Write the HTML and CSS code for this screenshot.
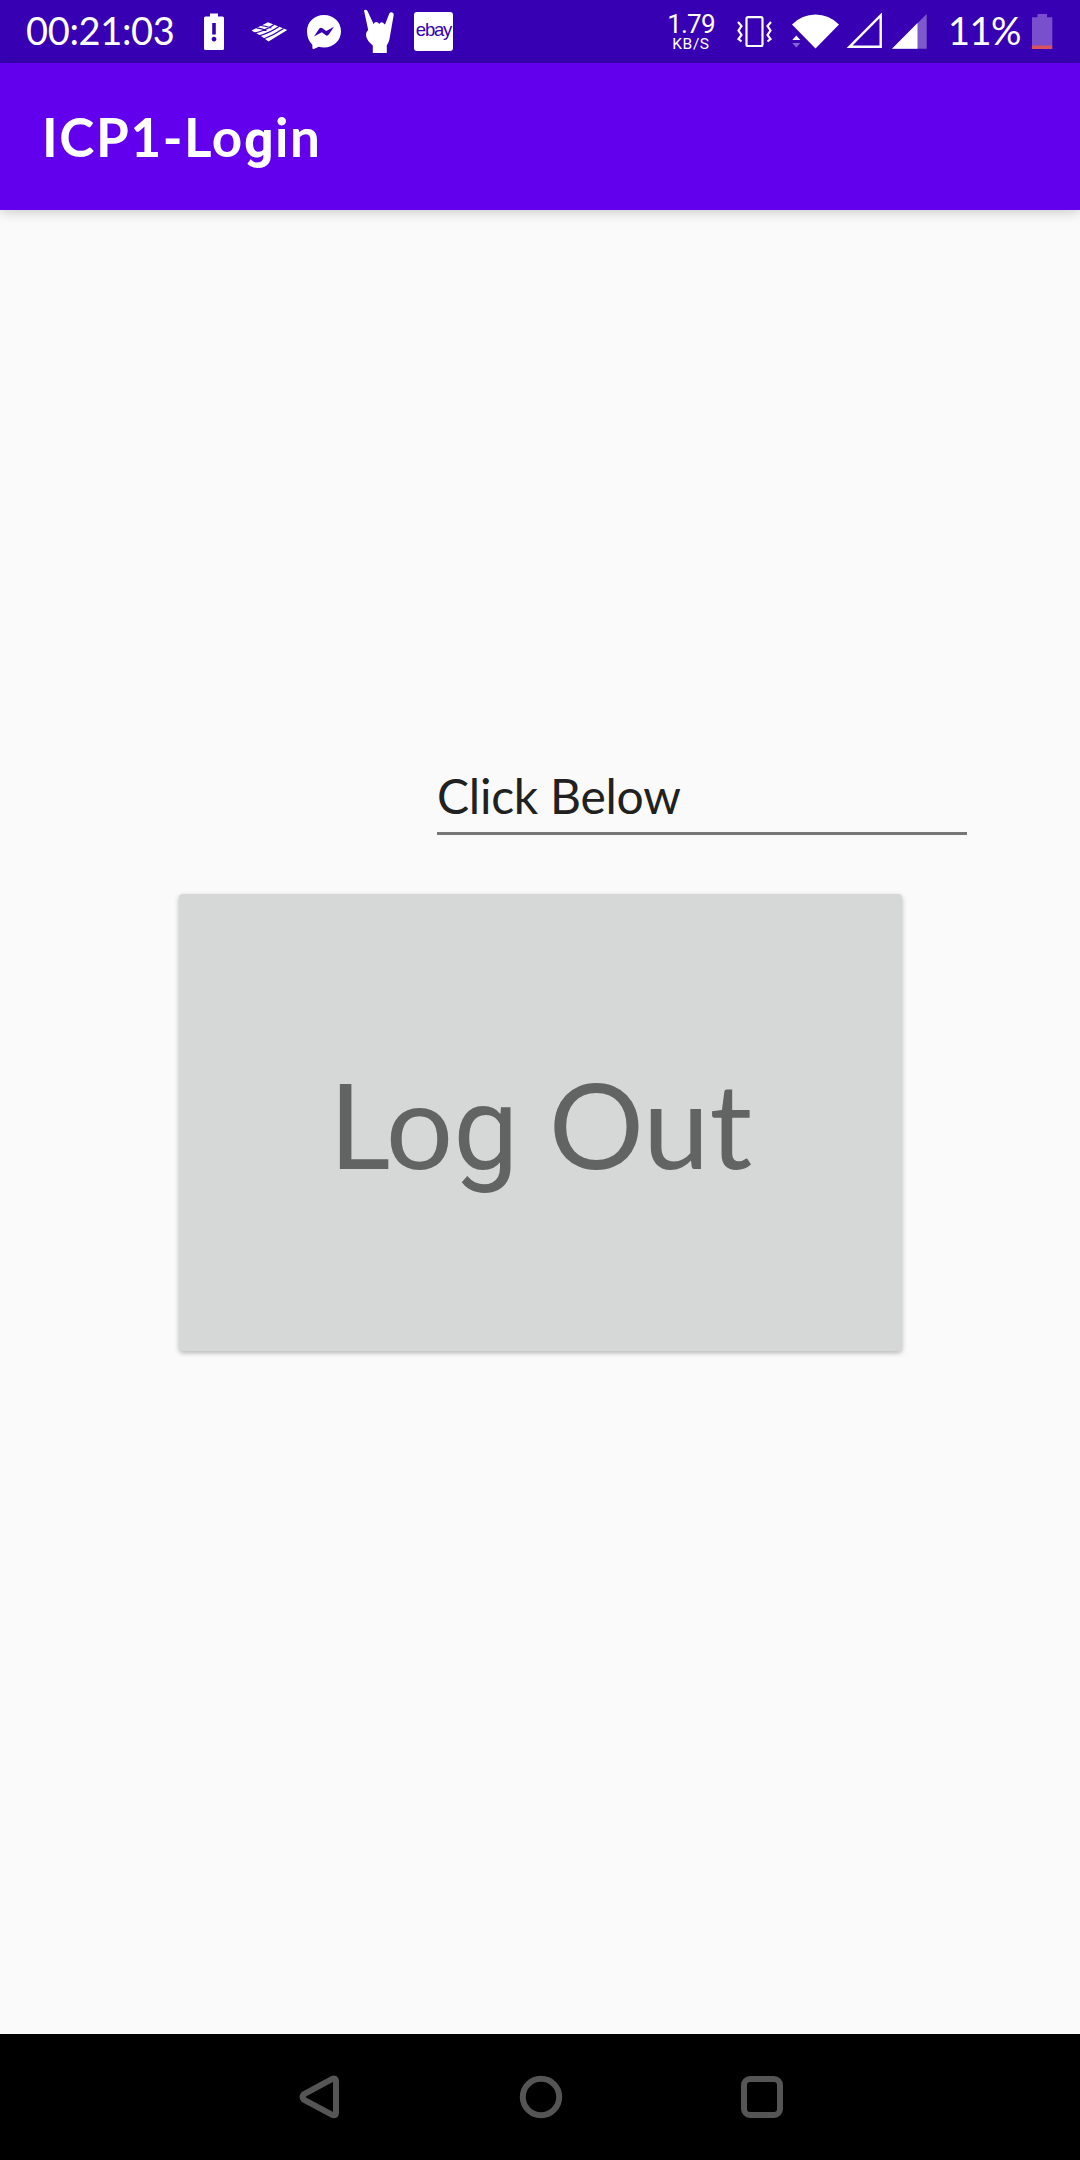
FILE: index.html
```html
<!DOCTYPE html>
<html lang="en">
<head>
<meta charset="utf-8">
<title>ICP1-Login</title>
<link rel="stylesheet" href="styles.css">
</head>
<body>
<div class="screen">
  <header class="status">
    <div class="status-left">
      <span class="clock">00:21:03</span>
      <svg class="icon" width="28" height="63" viewBox="200 0 28 63"><path fill="#fff" fill-rule="evenodd" d="M210 13.500h8v3h4.500q1.500 0 1.500 1.500v30.500q0 1.500-1.500 1.500h-17q-1.500 0-1.500-1.500v-30.500q0-1.500 1.500-1.500h4.500zM212.200 23v11.500h3.600V23zM214 36.700a2.400 2.400 0 1 0 .01 0z"/></svg>
      <svg class="icon" width="40" height="63" viewBox="250 0 40 63"><path fill="#fff" d="M251.500 30.500L268 22.300L287.300 30L268.500 41.500Q260 35 251.500 30.500z"/><path stroke="#3700b3" stroke-width="1.200" fill="none" d="M254.500 33Q265 31 274 24.500M259 35.800Q270 32.800 279 26.500M263.500 39Q274 35 283.500 28.500M256.500 27.800Q262 28.500 266.500 30.500M261 25.500Q266.500 26.200 271.500 28"/></svg>
      <svg class="icon" width="38" height="63" viewBox="305 0 38 63"><path fill="#fff" d="M324 15c9.600 0 17 7 17 16.300s-7.400 16.200-17 16.200q-2.800 0-5.200-.8l-5 2.200q-1.300.4-1.400-1l-.1-3.200c-3.400-3-5.300-7.700-5.300-13.400C307 22 314.400 15 324 15z"/><path fill="#3700b3" d="M314 36.500l5.200-7.800q1.400-1.800 3.200-.5l3.800 2.800 7.800-4.300-5.200 7.800q-1.400 1.900-3.200.6l-3.800-2.800z"/></svg>
      <svg class="icon" width="32" height="63" viewBox="363 0 32 63"><path fill="#fff" d="M364 10.500q2-1.500 3.500.5l6.200 13.300q.5-2.300 2.500-2.300t3 2q1-1.800 2.500-1.800t2.500 1.900l.8.300 4.300-11q1-1.700 3-.9 1.800.8 1.400 2.500l-4.200 24q-.5 3.500-2.700 6.300V53h-14v-7.500q-6-5-6.700-9.500-.4-4 2.100-6z"/></svg>
      <span class="ebay">ebay</span>
    </div>
    <div class="status-right">
      <div class="rate"><span class="rate-value">1.79</span><span class="rate-unit">KB/S</span></div>
      <svg class="icon" width="37" height="63" viewBox="736 0 37 63"><rect x="746.500" y="17.200" width="16" height="28.800" rx="1.500" fill="none" stroke="#fff" stroke-width="2.200"/><path fill="none" stroke="#fff" stroke-width="2.200" d="M738 22l3.500 4-3 4.500 3 4.500-3 4 3 2.500M771 22l-3.500 4 3 4.500-3 4.500 3 4-3 2.500"/></svg>
      <svg class="icon" width="48" height="63" viewBox="792 0 48 63"><path fill="#fff" d="M792 24.500q10-10 23.500-10t23.500 10L815.500 48.500z"/><path fill="#fff" stroke="#3700b3" stroke-width="1.500" paint-order="stroke" d="M792.300 40l4-4.500 4 4.500z"/><path fill="#fff" fill-opacity=".4" d="M792.300 43h8l-4 4.500z"/></svg>
      <svg class="icon" width="36" height="63" viewBox="846 0 36 63"><path fill="none" stroke="#fff" stroke-width="2.400" d="M849.500 46.800H880.700V15.500z"/></svg>
      <svg class="icon" width="36" height="63" viewBox="892 0 36 63"><path fill="#fff" fill-opacity=".35" d="M892 48.700H926.700V14z"/><path fill="#fff" d="M892 48.700H917.500V23z"/></svg>
      <span class="percent">11%</span>
      <svg class="icon" width="21" height="63" viewBox="1032 0 21 63"><path fill="#794fcd" d="M1037.500 14h9.500v3.300h5.300V46H1032V17.300h5.500z"/><path fill="#d9535d" d="M1032 45.500h20.300V49H1032z"/></svg>
    </div>
  </header>
  <div class="appbar"><h1 class="title">ICP1-Lo<span class="single-g">g</span>in</h1></div>
  <main class="content">
    <div class="field"><span class="field-text">Click Below</span></div>
    <button class="logout" type="button"><span class="logout-text">Lo<span class="single-g">g</span> Out</span></button>
  </main>
  <nav class="navbar">
    <svg width="42" height="44" viewBox="299 2075 42 44"><path class="nav-line" d="M303.700 2094.300L332.300 2078.800Q336 2077.800 336 2081V2113Q336 2116 332.300 2114.800L303.700 2099.600Q301.500 2097 303.700 2094.300z"/></svg>
    <svg width="44" height="44" viewBox="518 2075 44 44"><circle class="nav-line" cx="540" cy="2097" r="18.200"/></svg>
    <svg width="42" height="44" viewBox="741 2075 42 44"><rect class="nav-line" x="744" y="2079" width="36" height="36" rx="6"/></svg>
  </nav>
</div>
</body>
</html>
```
FILE: styles.css
```css
body { margin: 0; }
.screen {
  width: 1080px;
  height: 2160px;
  display: flex;
  flex-direction: column;
  background: #fafafa;
  font-family: Lato, "Noto Sans", sans-serif;
  overflow: hidden;
}
.status {
  height: 63px;
  display: flex;
  justify-content: space-between;
  box-sizing: border-box;
  padding: 0 27px 0 26px;
  background: #3700b3;
  color: #fff;
}
.status-left, .status-right { display: flex; align-items: center; }
.icon { display: block; flex: none; }
.clock { width: 174px; height: 63px; font-size: 38px; line-height: 61px; letter-spacing: -0.35px; white-space: nowrap; }
.status-left .icon + .icon { margin-left: 22px; }
.status-left .icon:nth-child(4) { margin-left: 15px; }
.status-left .icon:nth-child(5) { margin-left: 20px; }
.ebay {
  width: 39px;
  height: 39px;
  margin-left: 19px;
  border-radius: 3px;
  background: #fff;
  color: #3700b3;
  font: 18.500px/36px "Liberation Sans", sans-serif;
  letter-spacing: -1.2px;
  text-align: center;
}
.rate {
  width: 48px;
  margin-right: 21px;
  display: flex;
  flex-direction: column;
  align-items: center;
  font-family: Roboto, sans-serif;
  white-space: nowrap;
}
.rate-value { font-size: 26px; line-height: 24px; letter-spacing: -0.8px; }
.rate-unit { font-size: 15.500px; line-height: 16px; letter-spacing: 0.6px; }
.status-right .icon:nth-child(3) { margin-left: 19px; }
.status-right .icon:nth-child(4) { margin-left: 6px; }
.status-right .icon:nth-child(5) { margin-left: 10px; }
.percent { width: 84px; height: 63px; margin-left: 20px; font-size: 38px; line-height: 61px; letter-spacing: -0.6px; white-space: nowrap; }
.appbar {
  height: 147px;
  display: flex;
  align-items: center;
  box-sizing: border-box;
  padding-left: 42px;
  background: #6200ee;
  box-shadow: 0 2px 12px rgba(0, 0, 0, 0.2);
  z-index: 1;
}
.title { margin: 0; color: #fff; font-size: 53px; font-weight: 700; line-height: 72px; letter-spacing: 1.6px; white-space: nowrap; }
.single-g { font-family: Roboto, sans-serif; font-size: 0.975em; line-height: 0; }
.content { flex: 1; display: flex; flex-direction: column; }
.field {
  width: 530px;
  height: 60px;
  margin: 562px 0 0 437px;
  border-bottom: 3px solid #777;
  color: #212121;
  font-size: 48px;
  line-height: 48px;
  letter-spacing: -0.25px;
  white-space: nowrap;
}
.logout {
  width: 723px;
  height: 457px;
  margin: 59px 0 0 179px;
  padding: 0;
  border: 0;
  border-radius: 4px;
  background: #d6d8d7;
  box-shadow: 0 2px 5px rgba(0, 0, 0, 0.28);
  color: #626463;
  font: 119px/160px Lato, "Noto Sans", sans-serif;
  white-space: nowrap;
}
.navbar {
  height: 126px;
  display: flex;
  justify-content: space-between;
  align-items: center;
  box-sizing: border-box;
  padding: 0 297px 0 299px;
  background: #000;
}
.nav-line { fill: none; stroke: #555; stroke-width: 6; stroke-linejoin: round; }
```
